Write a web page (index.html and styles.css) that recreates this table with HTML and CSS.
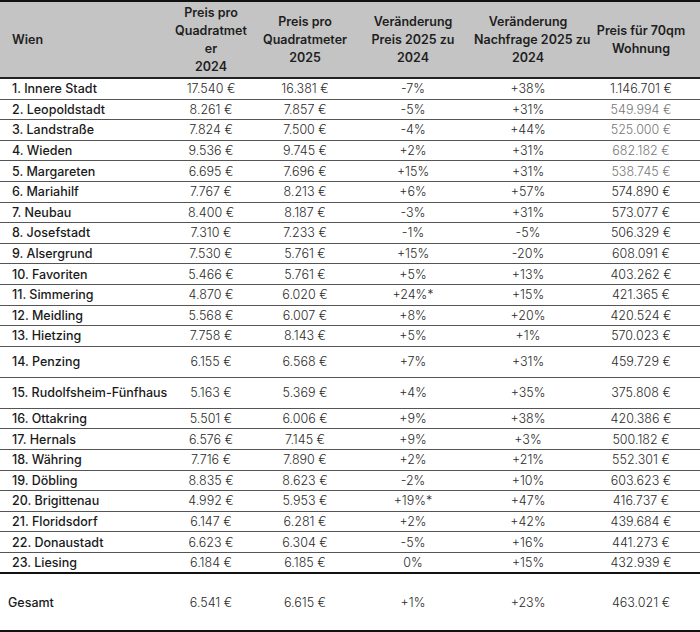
FILE: index.html
```html
<!DOCTYPE html>
<html lang="de">
<head>
<meta charset="utf-8">
<title>Wien Preise</title>
<link rel="stylesheet" href="styles.css">
</head>
<body>
<table class="tbl">
  <colgroup>
    <col class="c1"><col class="c2"><col class="c3"><col class="c4"><col class="c5"><col class="c6">
  </colgroup>
  <thead>
    <tr>
      <th class="name">Wien</th>
      <th>Preis pro<br>Quadratmet<br>er<br>2024</th>
      <th>Preis pro<br>Quadratmeter<br>2025</th>
      <th>Veränderung<br>Preis 2025 zu<br>2024</th>
      <th>Veränderung<br>Nachfrage 2025 zu<br>2024</th>
      <th>Preis für 70qm<br>Wohnung</th>
    </tr>
  </thead>
  <tbody>
    <tr><td class="name">1. Innere Stadt</td><td>17.540 €</td><td>16.381 €</td><td>-7%</td><td>+38%</td><td>1.146.701 €</td></tr>
    <tr><td class="name">2. Leopoldstadt</td><td>8.261 €</td><td>7.857 €</td><td>-5%</td><td>+31%</td><td class="muted">549.994 €</td></tr>
    <tr><td class="name">3. Landstraße</td><td>7.824 €</td><td>7.500 €</td><td>-4%</td><td>+44%</td><td class="muted">525.000 €</td></tr>
    <tr><td class="name">4. Wieden</td><td>9.536 €</td><td>9.745 €</td><td>+2%</td><td>+31%</td><td class="muted">682.182 €</td></tr>
    <tr><td class="name">5. Margareten</td><td>6.695 €</td><td>7.696 €</td><td>+15%</td><td>+31%</td><td class="muted">538.745 €</td></tr>
    <tr><td class="name">6. Mariahilf</td><td>7.767 €</td><td>8.213 €</td><td>+6%</td><td>+57%</td><td>574.890 €</td></tr>
    <tr><td class="name">7. Neubau</td><td>8.400 €</td><td>8.187 €</td><td>-3%</td><td>+31%</td><td>573.077 €</td></tr>
    <tr><td class="name">8. Josefstadt</td><td>7.310 €</td><td>7.233 €</td><td>-1%</td><td>-5%</td><td>506.329 €</td></tr>
    <tr><td class="name">9. Alsergrund</td><td>7.530 €</td><td>5.761 €</td><td>+15%</td><td>-20%</td><td>608.091 €</td></tr>
    <tr><td class="name">10. Favoriten</td><td>5.466 €</td><td>5.761 €</td><td>+5%</td><td>+13%</td><td>403.262 €</td></tr>
    <tr><td class="name">11. Simmering</td><td>4.870 €</td><td>6.020 €</td><td>+24%*</td><td>+15%</td><td>421.365 €</td></tr>
    <tr><td class="name">12. Meidling</td><td>5.568 €</td><td>6.007 €</td><td>+8%</td><td>+20%</td><td>420.524 €</td></tr>
    <tr><td class="name">13. Hietzing</td><td>7.758 €</td><td>8.143 €</td><td>+5%</td><td>+1%</td><td>570.023 €</td></tr>
    <tr class="tall"><td class="name">14. Penzing</td><td>6.155 €</td><td>6.568 €</td><td>+7%</td><td>+31%</td><td>459.729 €</td></tr>
    <tr class="tall"><td class="name">15. Rudolfsheim-Fünfhaus</td><td>5.163 €</td><td>5.369 €</td><td>+4%</td><td>+35%</td><td>375.808 €</td></tr>
    <tr><td class="name">16. Ottakring</td><td>5.501 €</td><td>6.006 €</td><td>+9%</td><td>+38%</td><td>420.386 €</td></tr>
    <tr><td class="name">17. Hernals</td><td>6.576 €</td><td>7.145 €</td><td>+9%</td><td>+3%</td><td>500.182 €</td></tr>
    <tr><td class="name">18. Währing</td><td>7.716 €</td><td>7.890 €</td><td>+2%</td><td>+21%</td><td>552.301 €</td></tr>
    <tr><td class="name">19. Döbling</td><td>8.835 €</td><td>8.623 €</td><td>-2%</td><td>+10%</td><td>603.623 €</td></tr>
    <tr><td class="name">20. Brigittenau</td><td>4.992 €</td><td>5.953 €</td><td>+19%*</td><td>+47%</td><td>416.737 €</td></tr>
    <tr><td class="name">21. Floridsdorf</td><td>6.147 €</td><td>6.281 €</td><td>+2%</td><td>+42%</td><td>439.684 €</td></tr>
    <tr><td class="name">22. Donaustadt</td><td>6.623 €</td><td>6.304 €</td><td>-5%</td><td>+16%</td><td>441.273 €</td></tr>
    <tr class="last"><td class="name">23. Liesing</td><td>6.184 €</td><td>6.185 €</td><td>0%</td><td>+15%</td><td>432.939 €</td></tr>
  </tbody>
  <tfoot>
    <tr><td class="name total">Gesamt</td><td>6.541 €</td><td>6.615 €</td><td>+1%</td><td>+23%</td><td>463.021 €</td></tr>
  </tfoot>
</table>
</body>
</html>
```

FILE: styles.css
```css
html, body {
  margin: 0;
  padding: 0;
  background: #ffffff;
}

.tbl {
  width: 700px;
  border-collapse: collapse;
  table-layout: fixed;
  font-family: "Inter", "Open Sans", sans-serif;
  color: #222222;
  border-top: 2px solid #111111;
  border-bottom: 2px solid #111111;
}

.c1 { width: 164px; }
.c2 { width: 94px; }
.c3 { width: 94px; }
.c4 { width: 122px; }
.c5 { width: 108px; }
.c6 { width: 118px; }

.tbl th {
  background: #c4c4c4;
  font-size: 12.5px;
  font-weight: 600;
  line-height: 18px;
  text-align: center;
  height: 75px;
  padding: 0;
  border-bottom: 2px solid #222222;
  color: #1e1e1e;
  white-space: nowrap;
}

.tbl th.name,
.tbl td.name {
  text-align: left;
  padding-left: 12px;
}

.tbl td {
  font-size: 12.5px;
  font-weight: 300;
  text-align: center;
  height: 19.6px;
  padding: 0;
  border-bottom: 1px solid #555555;
  color: #2a2a2a;
  white-space: nowrap;
}

.tbl td.name {
  font-weight: 500;
  color: #1a1a1a;
}

.tbl td.muted {
  color: #777777;
}

.tbl tr.tall td {
  height: 30px;
}

.tbl tr.last td {
  border-bottom: 2px solid #111111;
}

.tbl tfoot td {
  height: 56px;
  border-bottom: none;
}

.tbl td.total {
  padding-left: 8px;
}
```
